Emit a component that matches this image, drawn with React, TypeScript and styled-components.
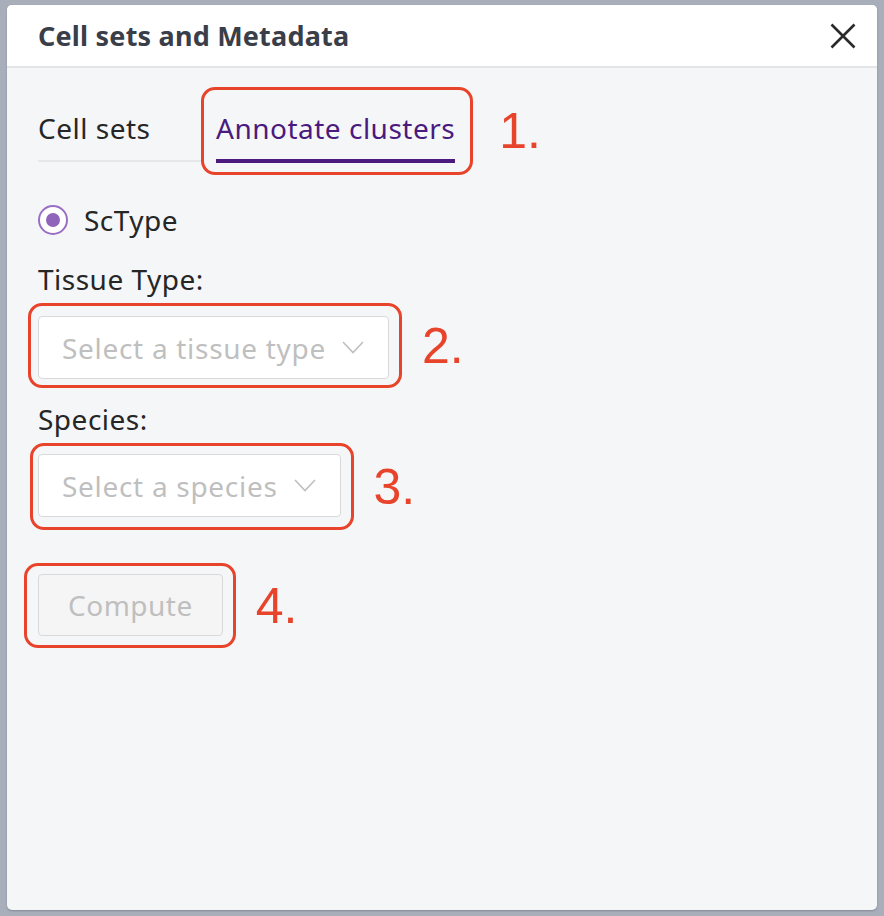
import React from "react";
import styled, { createGlobalStyle } from "styled-components";

const GlobalStyle = createGlobalStyle`
  html, body {
    margin: 0;
    padding: 0;
    background: #a9aebb;
  }
  body {
    font-family: "Noto Sans", "Open Sans", sans-serif;
  }
`;

const Page = styled.div`
  width: 884px;
  height: 916px;
  box-sizing: border-box;
  padding: 5px 7px 6px 7px;
  display: flex;
`;

const Panel = styled.div`
  flex: 1;
  display: flex;
  flex-direction: column;
  background: #f5f6f8;
  border-radius: 5px;
  overflow: hidden;
  box-shadow: 0 1px 2px rgba(60, 64, 80, 0.35);
`;

const Header = styled.div`
  height: 61px;
  display: flex;
  align-items: center;
  justify-content: space-between;
  padding: 0 19px 0 31px;
  background: #ffffff;
  border-bottom: 2px solid #e2e4e8;
`;

const Title = styled.div`
  font-size: 27px;
  font-weight: 700;
  letter-spacing: 0.2px;
  color: #3a3e49;
`;

const CloseButton = styled.button`
  border: none;
  background: none;
  padding: 0;
  width: 30px;
  height: 30px;
  display: flex;
  align-items: center;
  justify-content: center;
  cursor: pointer;
`;

const Body = styled.div`
  padding: 19px 31px 0 31px;
  display: flex;
  flex-direction: column;
  align-items: flex-start;
  font-size: 28px;
  letter-spacing: 0.5px;
`;

const Row = styled.div<{ $align?: string }>`
  display: flex;
  align-items: ${(p) => p.$align || "center"};
`;

const Tab = styled.div<{ $active?: boolean }>`
  line-height: 36px;
  color: ${(p) => (p.$active ? "#4a1a7e" : "#262626")};
  padding-bottom: ${(p) => (p.$active ? "13px" : "14px")};
  border-bottom: ${(p) => (p.$active ? "4px solid #4a1a7e" : "2px solid #e6e7ea")};
`;

const FirstTab = styled(Tab)`
  width: 163px;
  margin-bottom: 13px;
  box-sizing: border-box;
`;

// red annotation frame drawn round each step
const Callout = styled.div<{ $pad: string; $shift?: number }>`
  border: 3px solid #e8432b;
  border-radius: 14px;
  padding: ${(p) => p.$pad};
  margin-left: ${(p) => p.$shift || 0}px;
`;

const Step = styled.div<{ $gap: number }>`
  margin-left: ${(p) => p.$gap}px;
  font-family: "Liberation Sans", Arial, sans-serif;
  font-size: 50px;
  line-height: 50px;
  letter-spacing: 0;
  color: #e8432b;
`;

const RadioRow = styled.label`
  margin-top: 27px;
  display: flex;
  align-items: center;
  gap: 16px;
  line-height: 36px;
  color: #262626;
`;

const RadioCircle = styled.span`
  width: 30px;
  height: 30px;
  box-sizing: border-box;
  border: 2px solid #9a6fc3;
  border-radius: 50%;
  background: #ffffff;
  display: flex;
  align-items: center;
  justify-content: center;
  &::after {
    content: "";
    width: 14px;
    height: 14px;
    border-radius: 50%;
    background: #9064b8;
  }
`;

const FieldLabel = styled.div<{ $top: number }>`
  margin-top: ${(p) => p.$top}px;
  margin-bottom: 6px;
  line-height: 36px;
  color: #262626;
`;

const Select = styled.div`
  height: 63px;
  box-sizing: border-box;
  display: inline-flex;
  align-items: center;
  gap: 16px;
  padding: 0 24px 0 23px;
  background: #ffffff;
  border: 1.5px solid #d9d9d9;
  border-radius: 4px;
  color: #bfbfbf;
  letter-spacing: 0.7px;
  white-space: nowrap;
`;

const ComputeButton = styled.button`
  height: 62px;
  padding: 0 29px;
  background: #f5f5f5;
  border: 1.5px solid #d9d9d9;
  border-radius: 4px;
  font-family: "Noto Sans", "Open Sans", sans-serif;
  font-size: 28px;
  letter-spacing: 0.5px;
  color: #bfbfbf;
  cursor: not-allowed;
`;

const Chevron = () => (
  <svg width="22" height="13" viewBox="0 0 22 13" fill="none">
    <path d="M1 1 L11 11.5 L21 1" stroke="#bfbfbf" strokeWidth="1.6" />
  </svg>
);

const CloseIcon = () => (
  <svg width="26" height="26" viewBox="0 0 26 26">
    <path d="M1.5 1.5 L24.5 24.5 M24.5 1.5 L1.5 24.5" stroke="#2a2a2a" strokeWidth="2.6" />
  </svg>
);

export default function App() {
  return (
    <>
      <GlobalStyle />
      <Page>
        <Panel>
          <Header>
            <Title>Cell sets and Metadata</Title>
            <CloseButton aria-label="Close">
              <CloseIcon />
            </CloseButton>
          </Header>
          <Body>
            <Row $align="flex-end">
              <FirstTab>Cell sets</FirstTab>
              <Callout $pad="20px 15px 9px 12px" style={{ alignSelf: "flex-start" }}>
                <Tab $active>Annotate clusters</Tab>
              </Callout>
              <Step $gap={26} style={{ alignSelf: "center" }}>1.</Step>
            </Row>

            <RadioRow>
              <RadioCircle />
              ScType
            </RadioRow>

            <FieldLabel $top={23}>Tissue Type:</FieldLabel>
            <Row>
              <Callout $pad="10px 10px 6px 7px" $shift={-10}>
                <Select>
                  Select a tissue type
                  <Chevron />
                </Select>
              </Callout>
              <Step $gap={20}>2.</Step>
            </Row>

            <FieldLabel $top={13}>Species:</FieldLabel>
            <Row>
              <Callout $pad="8px 10px 10px 5px" $shift={-8}>
                <Select>
                  Select a species
                  <Chevron />
                </Select>
              </Callout>
              <Step $gap={20}>3.</Step>
            </Row>

            <Row style={{ marginTop: 33 }}>
              <Callout $pad="8px 10px 9px 11px" $shift={-14}>
                <ComputeButton disabled>Compute</ComputeButton>
              </Callout>
              <Step $gap={20}>4.</Step>
            </Row>
          </Body>
        </Panel>
      </Page>
    </>
  );
}
